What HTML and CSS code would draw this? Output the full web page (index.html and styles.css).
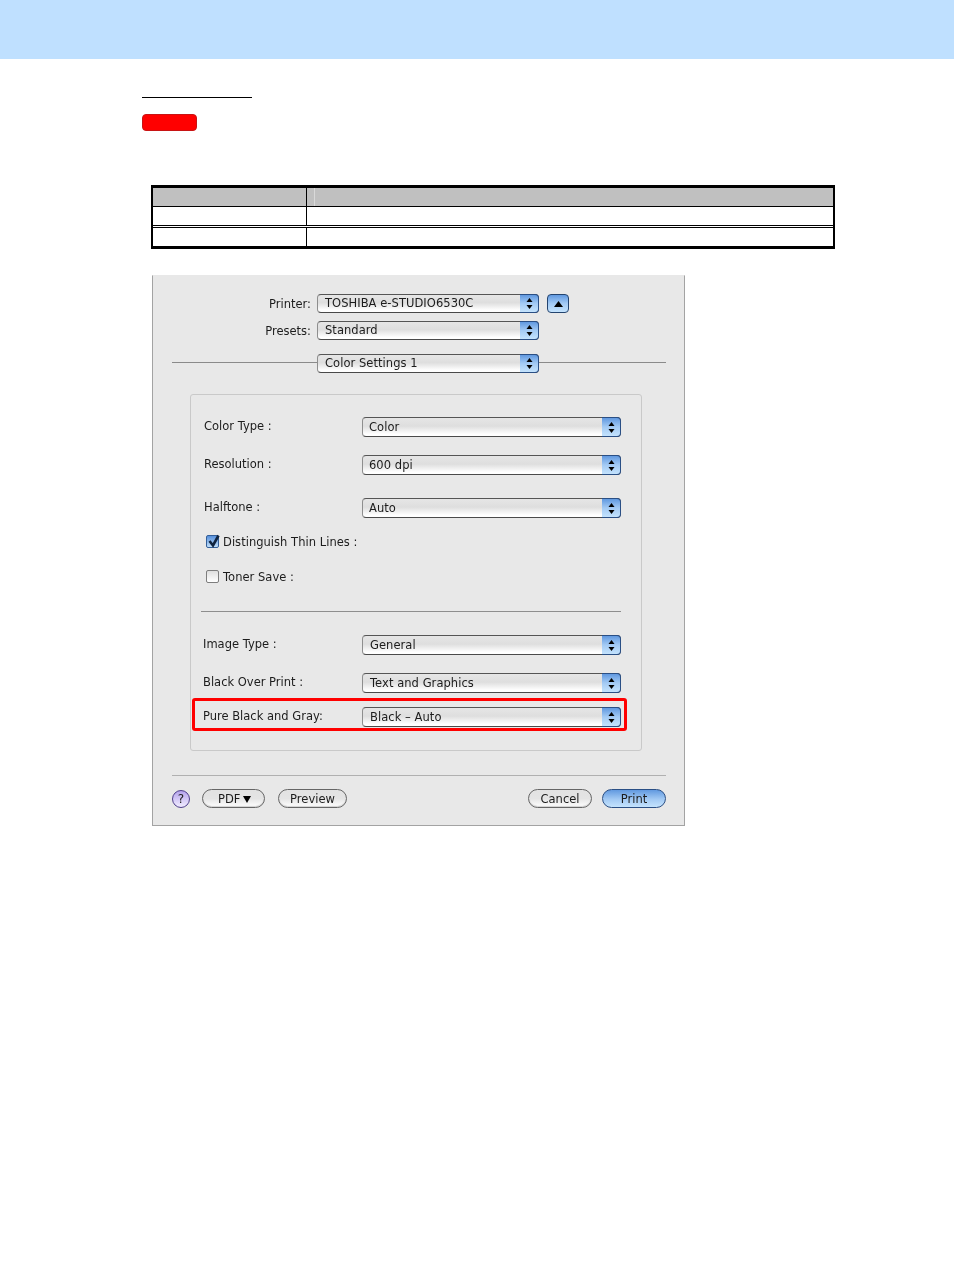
FILE: index.html
```html
<!DOCTYPE html>
<html>
<head>
<meta charset="utf-8">
<title>Color Settings</title>
<link rel="stylesheet" href="styles.css">
</head>
<body>
<div class="banner"></div>
<main class="page">
  <div class="rule"></div>
  <div class="badge"></div>
  <div class="table">
    <div class="cell head first"></div><div class="cell head second"></div>
    <div class="cell first"></div><div class="cell"></div>
    <div class="cell first last"></div><div class="cell last"></div>
  </div>
  <section class="dialog">
    <div class="top-row printer">
      <span class="top-label">Printer:</span>
      <div class="select top-select"><span class="value">TOSHIBA e-STUDIO6530C</span><span class="stepper"><svg width="7" height="13" viewBox="0 0 7 13"><path d="M3.5 1 6.5 5H.5zM3.5 12 .5 8h6z"/></svg></span></div>
      <span class="disclose"><svg width="9" height="6" viewBox="0 0 9 6"><path d="M4.5 0 9 6H0z"/></svg></span>
    </div>
    <div class="top-row presets">
      <span class="top-label">Presets:</span>
      <div class="select top-select"><span class="value">Standard</span><span class="stepper"><svg width="7" height="13" viewBox="0 0 7 13"><path d="M3.5 1 6.5 5H.5zM3.5 12 .5 8h6z"/></svg></span></div>
    </div>
    <div class="pane-row">
      <span class="line line-left"></span>
      <div class="select top-select"><span class="value">Color Settings 1</span><span class="stepper"><svg width="7" height="13" viewBox="0 0 7 13"><path d="M3.5 1 6.5 5H.5zM3.5 12 .5 8h6z"/></svg></span></div>
      <span class="line line-right"></span>
    </div>
    <div class="box">
      <div class="row r-color"><span class="label">Color Type :</span><div class="select wide"><span class="value tight">Color</span><span class="stepper"><svg width="7" height="13" viewBox="0 0 7 13"><path d="M3.5 1 6.5 5H.5zM3.5 12 .5 8h6z"/></svg></span></div></div>
      <div class="row r-res"><span class="label">Resolution :</span><div class="select wide"><span class="value tight">600 dpi</span><span class="stepper"><svg width="7" height="13" viewBox="0 0 7 13"><path d="M3.5 1 6.5 5H.5zM3.5 12 .5 8h6z"/></svg></span></div></div>
      <div class="row r-half"><span class="label">Halftone :</span><div class="select wide"><span class="value tight">Auto</span><span class="stepper"><svg width="7" height="13" viewBox="0 0 7 13"><path d="M3.5 1 6.5 5H.5zM3.5 12 .5 8h6z"/></svg></span></div></div>
      <div class="check-row r-thin"><span class="check on"><svg width="13" height="14" viewBox="0 0 13 14"><path d="M2.5 7 6 11.5 11.5 1.5" fill="none" stroke="#10243f" stroke-width="2.6"/></svg></span><span class="check-label">Distinguish Thin Lines :</span></div>
      <div class="check-row r-toner"><span class="check"></span><span class="check-label">Toner Save :</span></div>
      <div class="divider"></div>
      <div class="row lower r-image"><span class="label">Image Type :</span><div class="select wide"><span class="value">General</span><span class="stepper"><svg width="7" height="13" viewBox="0 0 7 13"><path d="M3.5 1 6.5 5H.5zM3.5 12 .5 8h6z"/></svg></span></div></div>
      <div class="row lower r-over"><span class="label">Black Over Print :</span><div class="select wide"><span class="value">Text and Graphics</span><span class="stepper"><svg width="7" height="13" viewBox="0 0 7 13"><path d="M3.5 1 6.5 5H.5zM3.5 12 .5 8h6z"/></svg></span></div></div>
      <div class="row lower r-pure"><span class="label">Pure Black and Gray:</span><div class="select wide"><span class="value">Black – Auto</span><span class="stepper"><svg width="7" height="13" viewBox="0 0 7 13"><path d="M3.5 1 6.5 5H.5zM3.5 12 .5 8h6z"/></svg></span></div><span class="highlight"></span></div>
    </div>
    <div class="footer">
      <span class="help">?</span>
      <span class="btn pdf">PDF <svg class="tri" width="8" height="7" viewBox="0 0 8 7"><path d="M0 0h8L4 7z"/></svg></span>
      <span class="btn preview">Preview</span>
      <span class="spacer"></span>
      <span class="btn cancel">Cancel</span>
      <span class="btn print">Print</span>
    </div>
  </section>
</main>
</body>
</html>
```

FILE: styles.css
```css
* { box-sizing: border-box; }
html, body { margin: 0; padding: 0; background: #fff; }
body { width: 954px; height: 1271px; overflow: hidden; font-family: "DejaVu Sans", sans-serif; color: #1c1c1c; }
.banner { height: 59px; background: #bfe0ff; }
.page { padding: 38px 0 0 142px; }
.rule { width: 110px; height: 1px; background: #000; }
.badge { width: 55px; height: 17px; margin-top: 16px; background: #ff0000; border: 1px solid #c81414; border-radius: 4px; }

.table { width: 684px; height: 64px; margin: 54px 0 0 9px; display: grid; grid-template-columns: 154px 1fr; grid-template-rows: 18px 20px 1fr; border: 2px solid #000; border-top-width: 3px; border-bottom-width: 3px; }
.cell { background: #fff; }
.cell.first { border-right: 1px solid #000; }
.cell:nth-child(3), .cell:nth-child(4) { border-top: 1px solid #000; border-bottom: 1px solid #000; }
.cell.last { border-top: 1px solid #000; margin-top: 1px; }
.cell.head { background: #c0c0c0; }
.cell.second { border-left: 7px solid #c0c0c0; position: relative; }
.cell.second::before { content: ""; position: absolute; left: 0; top: 0; bottom: 0; width: 1px; background: #d9d9d9; }

.dialog { width: 533px; height: 551px; margin: 26px 0 0 10px; background: #e8e8e8; border: 1px solid #a3a3a3; border-top-color: #e8e8e8; font-size: 11.5px; filter: blur(.3px); }
.top-row { display: flex; align-items: center; height: 19px; }
.printer { margin-top: 18px; }
.presets { margin-top: 8px; }
.top-label { width: 164px; padding-right: 6px; text-align: right; }
.select { display: flex; align-items: stretch; height: 19px; background: linear-gradient(#e6e6e6, #dedede 45%, #fff 90%); border: 1px solid #7c7c7c; border-top-color: #555; border-bottom-color: #4a4a4a; border-left-color: #8e8e8e; border-radius: 4px; }
.top-select { width: 222px; flex: none; }
.value { flex: 1; padding-left: 7px; line-height: 17px; letter-spacing: .05px; white-space: nowrap; }
.value.tight { padding-left: 6px; }
.stepper { width: 19px; margin: -1px -1px -1px 0; display: flex; align-items: center; justify-content: center; background: linear-gradient(#6199e0, #a3caf4 50%, #c4e3fd); border: 1px solid #2a4f85; border-left: 0; border-radius: 0 4px 4px 0; }
.stepper svg { fill: #000; }
.disclose { width: 22px; height: 19px; margin-left: 8px; display: flex; align-items: center; justify-content: center; background: linear-gradient(#6199e0, #a3caf4 50%, #c4e3fd); border: 1px solid #24446f; border-radius: 4px; }
.pane-row { display: flex; align-items: center; margin: 14px 18px 0 19px; }
.line { height: 1px; margin-bottom: 2px; background: #8a8a8a; }
.line-left { width: 145px; flex: none; }
.line-right { flex: 1; }
.box { width: 452px; height: 357px; margin: 21px 0 0 37px; border: 1px solid #c9c9c9; border-radius: 3px; padding: 0 0 0 13px; background: #e8e8e8; }
.row { position: relative; display: flex; align-items: center; height: 20px; }
.label { width: 158px; position: relative; top: -1px; }
.lower .label { margin-left: -1px; width: 159px; }
.wide { width: 259px; height: 20px; }
.wide .value { line-height: 19px; }
.r-color { margin-top: 22px; }
.r-res { margin-top: 18px; }
.r-half { margin-top: 23px; }
.check-row { display: flex; align-items: center; height: 14px; margin-left: 2px; }
.r-thin { margin-top: 16px; }
.r-toner { margin-top: 21px; }
.check { width: 13px; height: 13px; margin-right: 4px; border: 1px solid #7d7d7d; border-radius: 2px; background: linear-gradient(#dedede, #fff); position: relative; }
.check.on { background: linear-gradient(#5790dc, #c0def9); border-color: #335f99; }
.check svg { position: absolute; left: 0; top: -2px; }
.check-label { letter-spacing: .03px; position: relative; top: 1px; }
.divider { width: 420px; height: 1px; margin: 28px 0 0 -3px; background: #8e8e8e; }
.r-image { margin-top: 23px; }
.r-over { margin-top: 18px; }
.r-pure { margin-top: 14px; }
.highlight { position: absolute; left: -12px; top: -9px; width: 435px; height: 33px; border: 3px solid #ff0000; border-radius: 3px; }
.footer { display: flex; align-items: center; margin: 24px 18px 0 19px; padding-top: 13px; border-top: 1px solid #b0b0b0; box-sizing: content-box; height: 19px; }
.help { width: 18px; height: 18px; border-radius: 50%; border: 1px solid #4f3f8c; background: linear-gradient(#b5a4ec, #f1ecff); font: 12px/16px "DejaVu Sans", sans-serif; text-align: center; color: #222; }
.btn { height: 19px; border: 1px solid #666; border-radius: 10px; background: linear-gradient(#e2e2e2, #e4e4e4 50%, #fff); box-shadow: inset 0 -1px 1px #d0d0d0; text-align: center; line-height: 18px; }
.tri { margin-left: -1px; }
.pdf { width: 63px; margin-left: 12px; padding-left: 2px; }
.preview { width: 69px; margin-left: 13px; }
.spacer { flex: 1; }
.cancel { width: 64px; }
.print { width: 64px; margin-left: 10px; background: linear-gradient(#6199e0, #a3caf4 55%, #c4e3fd); border-color: #2a4f85; box-shadow: none; }
```
